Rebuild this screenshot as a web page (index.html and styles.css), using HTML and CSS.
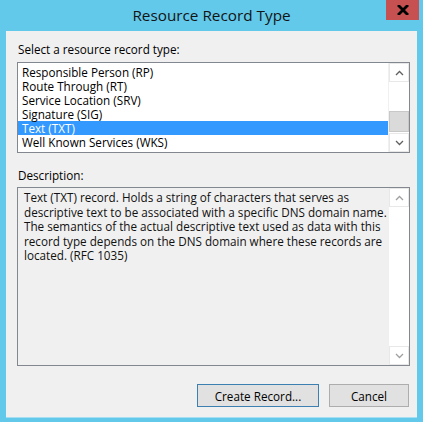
FILE: index.html
```html
<!DOCTYPE html>
<html>
<head>
<meta charset="utf-8">
<link rel="stylesheet" href="styles.css">
</head>
<body>
<div class="window">
  <div class="titlebar">
    <span class="title">Resource Record Type</span>
    <div class="close">
      <svg width="12" height="10" viewBox="0 0 12 10"><path d="M2 1 L10 9 M10 1 L2 9" stroke="#000" stroke-width="2.8" stroke-linecap="square"/></svg>
    </div>
  </div>
  <div class="client">
    <div class="label">Select a resource record type:</div>
    <div class="listbox">
      <div class="items">
        <div class="item">Responsible Person (RP)</div>
        <div class="item">Route Through (RT)</div>
        <div class="item">Service Location (SRV)</div>
        <div class="item">Signature (SIG)</div>
        <div class="item selected">Text (TXT)</div>
        <div class="item">Well Known Services (WKS)</div>
      </div>
      <div class="scrollbar">
        <div class="sbtn"><svg width="9" height="6" viewBox="0 0 9 6"><path d="M1 5 L4.5 1.5 L8 5" fill="none" stroke="#606060" stroke-width="1.3"/></svg></div>
        <div class="track"><div class="thumb"></div></div>
        <div class="sbtn"><svg width="9" height="6" viewBox="0 0 9 6"><path d="M1 1 L4.5 4.5 L8 1" fill="none" stroke="#606060" stroke-width="1.3"/></svg></div>
      </div>
    </div>
    <div class="label desc-label">Description:</div>
    <div class="descbox">
      <div class="desctext">Text (TXT) record. Holds a string of characters that serves as<br>descriptive text to be associated with a specific DNS domain name.<br>The semantics of the actual descriptive text used as data with this<br>record type depends on the DNS domain where these records are<br>located. (RFC 1035)</div>
      <div class="scrollbar">
        <div class="sbtn"><svg width="9" height="6" viewBox="0 0 9 6"><path d="M1 5 L4.5 1.5 L8 5" fill="none" stroke="#a0a0a0" stroke-width="1.3"/></svg></div>
        <div class="track"></div>
        <div class="sbtn"><svg width="9" height="6" viewBox="0 0 9 6"><path d="M1 1 L4.5 4.5 L8 1" fill="none" stroke="#a0a0a0" stroke-width="1.3"/></svg></div>
      </div>
    </div>
    <div class="buttons">
      <div class="btn default">Create Record...</div>
      <div class="btn cancel">Cancel</div>
    </div>
  </div>
</div>
</body>
</html>
```
FILE: styles.css
```css
html, body {
  margin: 0;
  padding: 0;
}
body {
  width: 423px;
  height: 422px;
  overflow: hidden;
  font-family: "Open Sans", "Noto Sans", sans-serif;
  font-size: 11.7px;
  color: #000;
}
.window {
  width: 423px;
  height: 422px;
  background: #62c9eb;
  display: flex;
  flex-direction: column;
}
.titlebar {
  position: relative;
  height: 31px;
  display: flex;
  justify-content: center;
  align-items: center;
}
.title {
  font-size: 15.3px;
  color: #141414;
  margin-top: -1px;
}
.close {
  position: absolute;
  left: 386px;
  top: 0;
  width: 33px;
  height: 20px;
  background: #c75050;
  display: flex;
  align-items: center;
  justify-content: center;
}
.client {
  margin: 0 6px 0 6px;
  height: 387px;
  background: #f0f0f0;
  padding: 11px 7px 0 11px;
  box-sizing: border-box;
  display: flex;
  flex-direction: column;
  border-bottom: 1px solid #a7dff2;
}
.label {
  height: 15px;
  line-height: 15px;
  padding-left: 1px;
}
.listbox {
  margin-top: 5px;
  height: 91px;
  border: 1px solid #828790;
  box-sizing: border-box;
  background: #fff;
  display: flex;
}
.items {
  flex: 1;
  padding-top: 2px;
  overflow: hidden;
}
.item {
  height: 14px;
  line-height: 14px;
  padding-left: 4px;
  white-space: nowrap;
}
.item.selected {
  background: #3399ff;
  color: #fff;
}
.scrollbar {
  width: 20px;
  display: flex;
  flex-direction: column;
  background: #fff;
  border-left: 1px solid #f0f0f0;
}
.sbtn {
  height: 19px;
  border: 1px solid #e8e8e8;
  box-sizing: border-box;
  display: flex;
  align-items: center;
  justify-content: center;
  background: #fff;
}
.track {
  flex: 1;
  display: flex;
  flex-direction: column;
  justify-content: flex-end;
  padding-bottom: 1px;
}
.thumb {
  height: 19px;
  background: #dadada;
  border: 1px solid #c8c8c8;
}
.desc-label {
  margin-top: 15px;
}
.descbox {
  margin-top: 4px;
  height: 179px;
  border: 1px solid #828790;
  box-sizing: border-box;
  background: #f0f0f0;
  display: flex;
}
.desctext {
  flex: 1;
  padding: 2px 0 0 6px;
  line-height: 14.5px;
  white-space: nowrap;
  overflow: hidden;
  color: #111;
}
.buttons {
  margin-top: 18px;
  display: flex;
  justify-content: flex-end;
  gap: 10px;
  padding-right: 1px;
}
.btn {
  height: 23px;
  box-sizing: border-box;
  background: #e1e1e1;
  border: 1px solid #adadad;
  display: flex;
  align-items: center;
  justify-content: center;
}
.btn.default {
  width: 122px;
  border-color: #3c7fb1;
}
.btn.cancel {
  width: 80px;
}
```
